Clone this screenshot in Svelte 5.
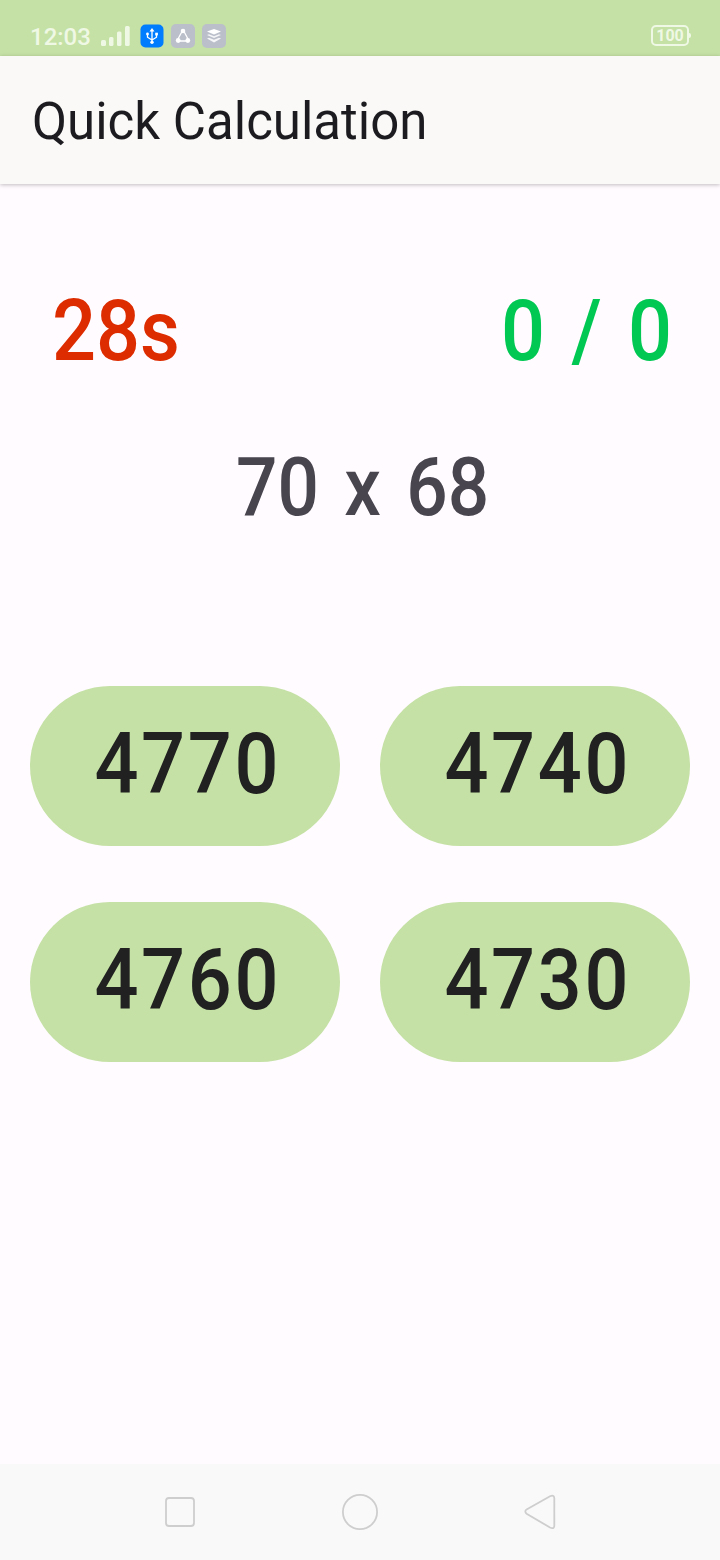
<script>
  const answers = ['4770', '4740', '4760', '4730'];
</script>

<main>
  <header class="status">
    <div class="left">
      <span class="time">12:03</span>
      <svg class="signal" width="30" height="22" viewBox="0 0 30 22" fill="#eff8e4">
        <rect x="1" y="15" width="5" height="6" rx="1.5" /><rect x="9" y="12" width="4.5" height="9" rx="1.5" />
        <rect x="17" y="6.500" width="4.500" height="14.500" rx="1.500" /><rect x="25" y="1" width="4.700" height="20" rx="1.500" />
      </svg>
      <svg class="badge first" viewBox="0 0 24 24">
        <rect x=".5" y=".5" width="23" height="23" rx="5" fill="#007cff" />
        <g fill="none" stroke="#fff" stroke-width="1.3"><path d="M12 6v13M7.500 10v3.200L12 16l4.500-2.800V10" /></g>
        <path d="M12 4l-2.500 3.500h5z" fill="#fff" /><circle cx="7.500" cy="10" r="1.400" fill="#fff" /><path d="M15.200 8.700h2.700v2.700h-2.700z" fill="#fff" /><circle cx="12" cy="18.200" r="1.700" fill="#fff" />
      </svg>
      <svg class="badge" viewBox="0 0 24 24">
        <rect width="24" height="24" rx="5" fill="#babfca" />
        <path d="M11 7.500L7 15M13 7.500l4 7.500M8 17h8" fill="none" stroke="#fff" stroke-width="1.300" />
        <g fill="#fff"><circle cx="12" cy="7" r="2.300" /><circle cx="7.200" cy="16.500" r="2.400" /><circle cx="16.800" cy="16.500" r="2.400" /></g>
      </svg>
      <svg class="badge" viewBox="0 0 24 24">
        <rect width="24" height="24" rx="5" fill="#babfca" />
        <g fill="#fff"><path d="M12 5l7 2.500-7 3-7-3z" /><path d="M5 11l2-.8 5 2 5-2 2 .8-7 3z" opacity=".85" /><path d="M5 14.500l2-.8 5 2 5-2 2 .8-7 4z" opacity=".85" /></g>
      </svg>
    </div>
    <div class="battery"><span>100</span></div>
  </header>

  <div class="appbar"><h1>Quick Calculation</h1></div>

  <section class="game">
    <div class="stats">
      <span class="num timer">28s</span>
      <span class="num score">0 / 0</span>
    </div>
    <div class="question"><span class="num">70 x 68</span></div>
    <div class="answers">
      {#each answers as answer}
        <button><span class="num">{answer}</span></button>
      {/each}
    </div>
  </section>

  <nav>
    <svg width="36" height="36" viewBox="0 0 36 36"><rect x="4" y="4" width="28" height="28" rx="3" /></svg>
    <svg width="36" height="36" viewBox="0 0 36 36"><circle cx="18" cy="18" r="17.100" /></svg>
    <svg width="36" height="36" viewBox="0 0 36 36"><path d="M4.600 15.400Q2 17.500 4.600 19.700L28 33.500Q32 35.500 32.300 32V4Q32 .5 28 2.300Z" /></svg>
  </nav>
</main>

<style>
  main {
    width: 720px;
    height: 1560px;
    display: flex;
    flex-direction: column;
    background: #fffbff;
    font-family: Roboto, sans-serif;
  }
  .status {
    height: 56px;
    box-sizing: border-box;
    flex: none;
    padding: 15px 29px 0 30px;
    display: flex;
    justify-content: space-between;
    align-items: center;
    background: #c5e1a5;
  }
  .left { display: flex; align-items: center; }
  .time {
    color: #eff8e4;
    font-size: 24px;
    font-weight: 500;
    width: 70px;
    line-height: 30px;
    padding-top: 2px;
  }
  .badge { width: 24px; height: 24px; margin-left: 7px; }
  .badge.first { margin-left: 10px; }
  .battery {
    width: 38px;
    height: 21px;
    box-sizing: border-box;
    margin-right: 2px;
    border: 2px solid #eff8e4;
    border-radius: 5px;
    position: relative;
    display: flex;
    align-items: center;
    justify-content: center;
    color: #eff8e4;
    font-size: 16px;
    font-weight: 700;
  }
  .battery::after {
    content: '';
    position: absolute;
    right: -4px;
    top: 6px;
    width: 2px;
    height: 5px;
    border-radius: 0 2px 2px 0;
    background: #eff8e4;
  }
  .appbar {
    height: 128px;
    flex: none;
    display: flex;
    align-items: center;
    padding-left: 32px;
    background: #faf9f7;
    box-shadow: 0 1px 4px rgba(0, 0, 0, .25);
  }
  h1 {
    margin: 4px 0 0;
    font-size: 51px;
    line-height: 60px;
    font-weight: 400;
    color: #1c1b1f;
    white-space: nowrap;
  }
  .game { flex: 1; }
  .num {
    display: inline-block;
    font-size: 86px;
    line-height: 100px;
    font-weight: 500;
    white-space: nowrap;
    transform: scaleX(.9);
  }
  .stats {
    display: flex;
    justify-content: space-between;
    padding: 97px 48px 0 52px;
  }
  .timer { color: #dd2c00; transform-origin: left; }
  .score { color: #00c853; transform-origin: right; word-spacing: 8px; }
  .question {
    display: flex;
    justify-content: center;
    padding: 57px 0 0 6px;
    color: #49454f;
  }
  .question .num { font-size: 81px; word-spacing: 8px; }
  .answers {
    display: grid;
    grid-template-columns: 1fr 1fr;
    gap: 56px 40px;
    padding: 148px 30px 0;
  }
  button {
    height: 160px;
    padding: 0 0 4px 5px;
    border: 0;
    border-radius: 80px;
    background: #c5e1a5;
    color: #212121;
    font-family: inherit;
    display: flex;
    align-items: center;
    justify-content: center;
  }
  button .num { letter-spacing: 3px; }
  nav {
    height: 96px;
    flex: none;
    display: grid;
    grid-template-columns: repeat(3, 36px);
    gap: 144px;
    justify-content: center;
    align-items: center;
    background: #f9f9f9;
  }
  nav svg { fill: none; stroke: #cecece; stroke-width: 1.8; }
</style>
